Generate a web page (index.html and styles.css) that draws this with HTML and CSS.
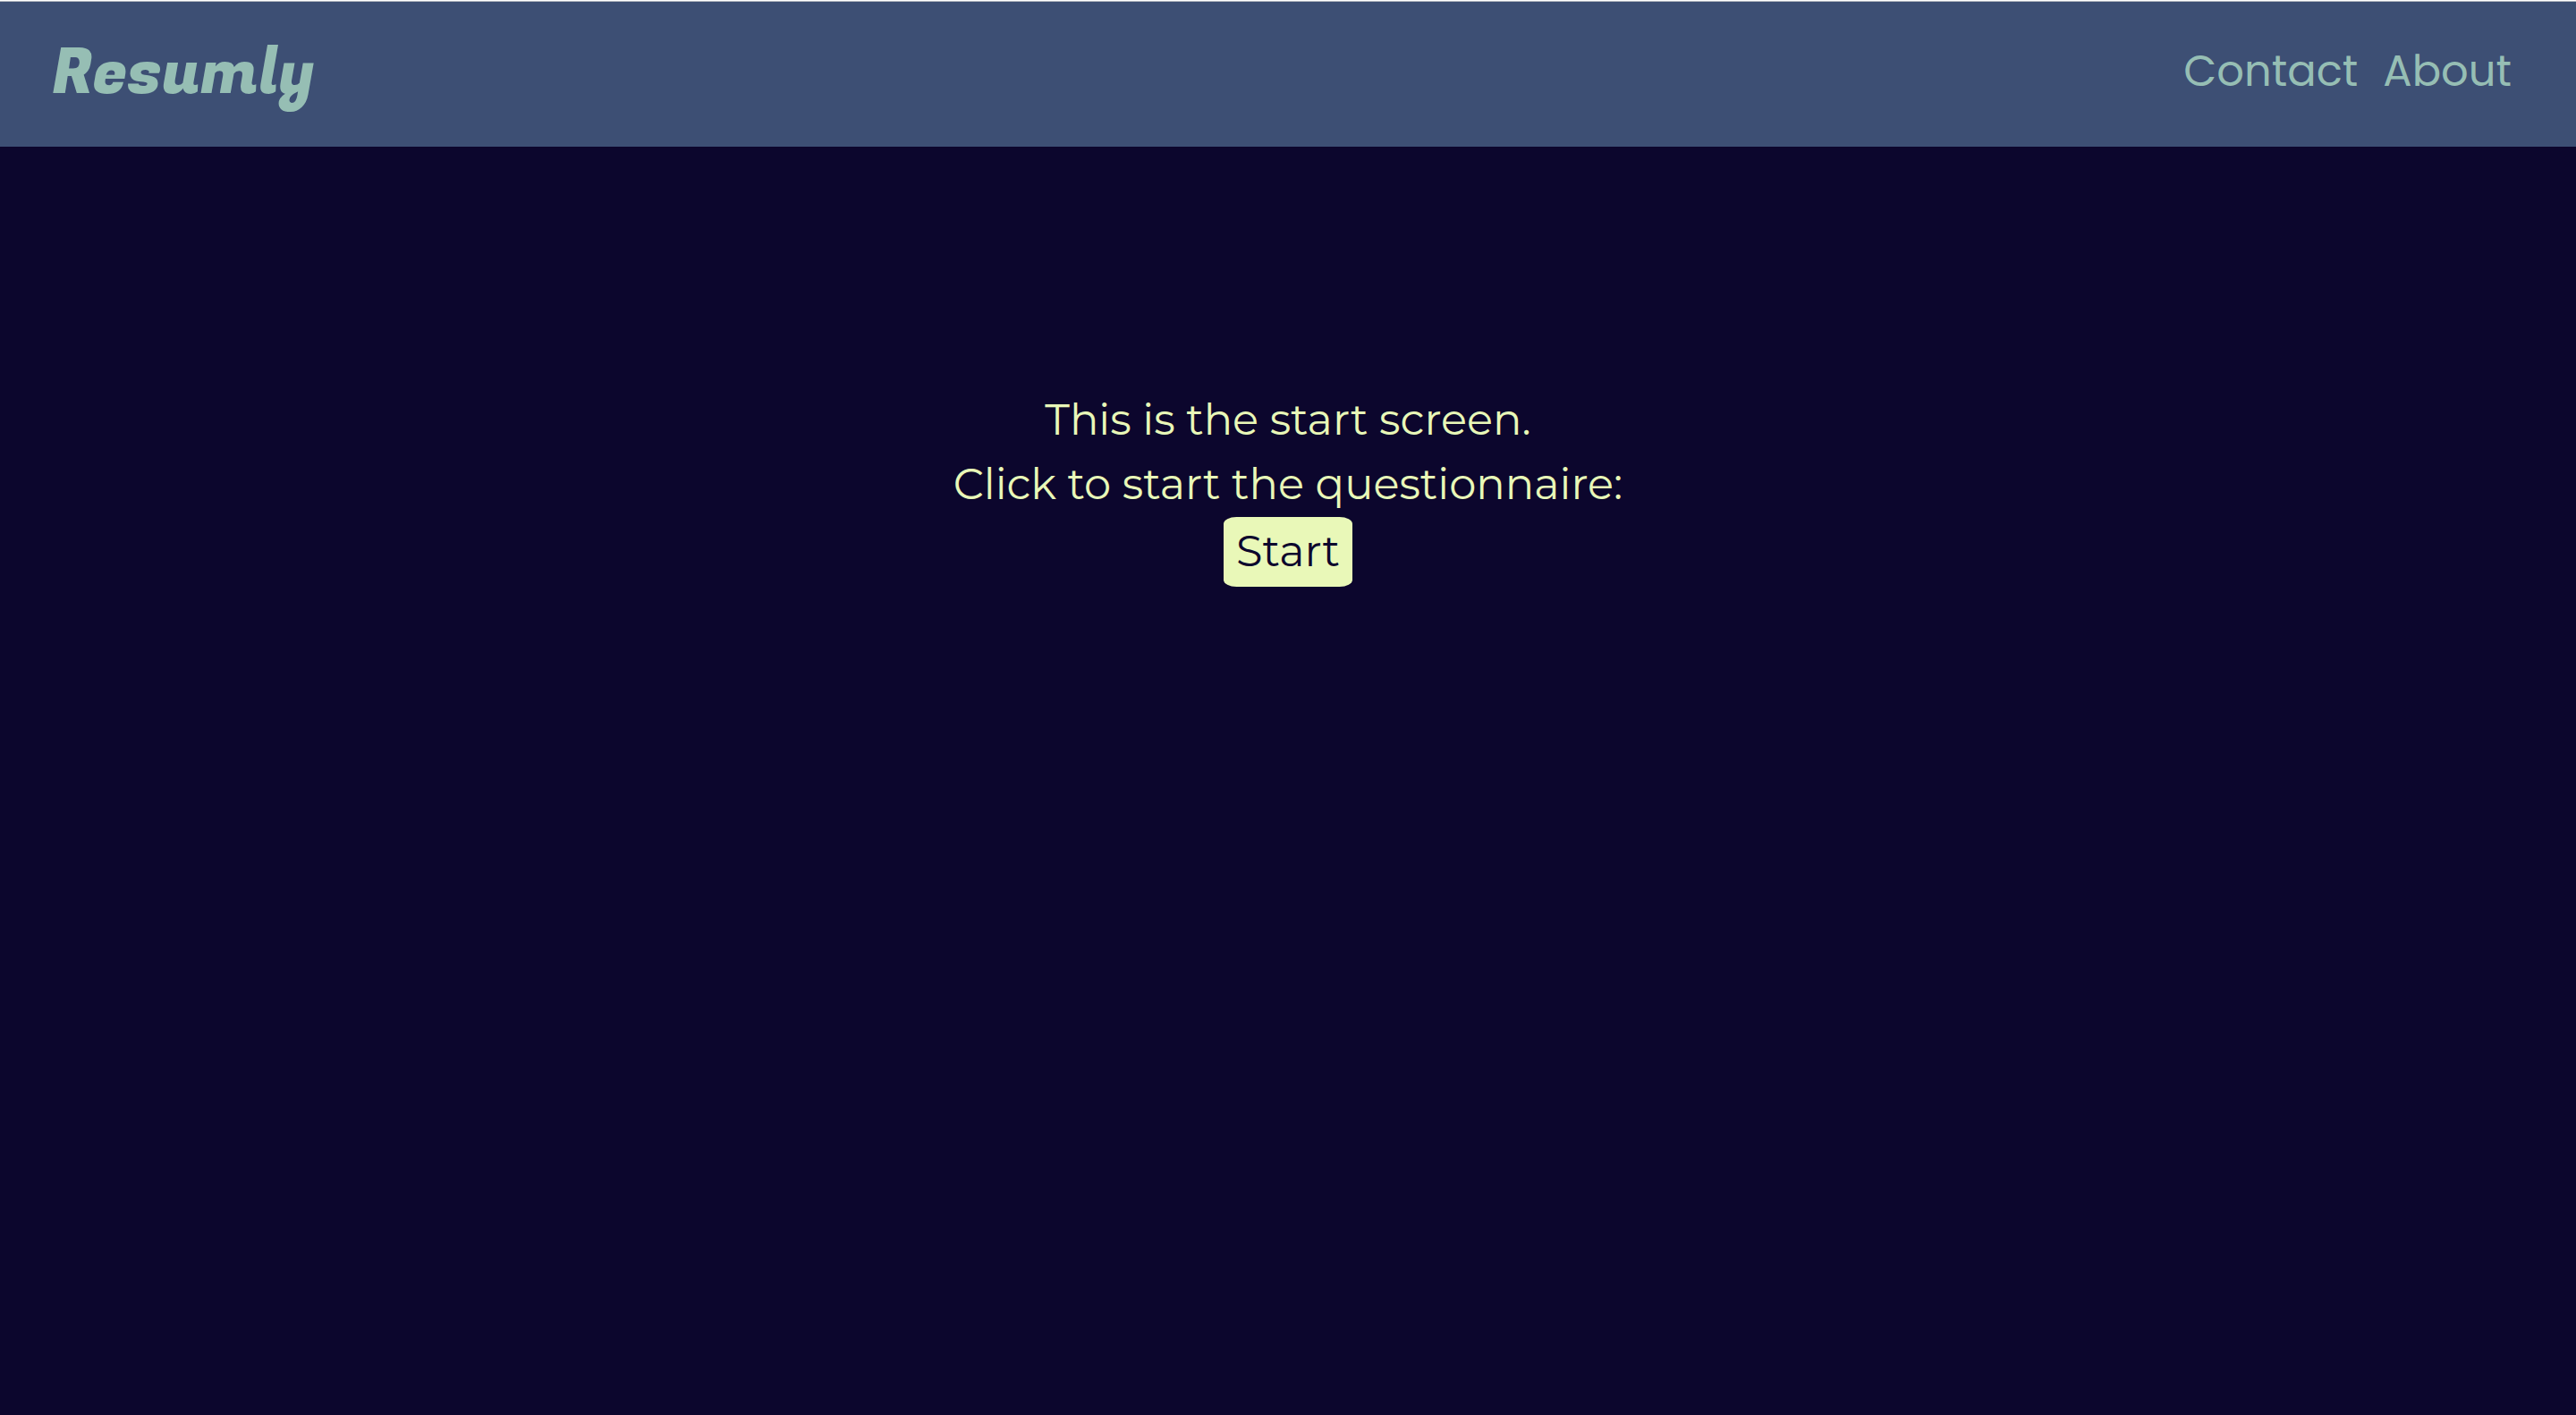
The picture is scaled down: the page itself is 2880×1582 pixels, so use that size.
FILE: index.html
```html
<!DOCTYPE html>
<html lang="en">
<head>
<meta charset="utf-8">
<title>Resumly</title>
<link rel="stylesheet" href="styles.css">
</head>
<body>
<header class="site-header">
  <a class="logo" href="#">Resumly</a>
  <nav class="site-nav">
    <a href="#">Contact</a>
    <a href="#">About</a>
  </nav>
</header>
<main class="start-screen">
  <p>This is the start screen.</p>
  <p>Click to start the questionnaire:</p>
  <button class="start-button" type="button">Start</button>
</main>
</body>
</html>
```
FILE: styles.css
```css
* {
  box-sizing: border-box;
}

body {
  margin: 0;
  min-height: 100vh;
  background: #0c062d;
  color: #e9f8b8;
  font-family: Montserrat, "Open Sans", sans-serif;
  font-size: 48px;
  font-weight: 400;
  line-height: 72px;
}

.site-header {
  display: flex;
  justify-content: space-between;
  align-items: flex-start;
  padding: 43px 72px 42px 58px;
  border-top: 1px solid #ffffff;
  background: #3d4f74;
  box-shadow: inset 0 1px #b4b8c0;
}

.site-header a {
  color: #96beb4;
  text-decoration: none;
}

.site-header .logo {
  font-family: "Fugaz One", "Noto Sans", sans-serif;
  font-size: 70px;
  line-height: 78px;
}

.site-nav {
  display: flex;
  gap: 28px;
  font-family: Poppins, Montserrat, sans-serif;
}

.start-screen {
  display: flex;
  flex-direction: column;
  align-items: center;
  padding: 269px 32px 32px;
}

.start-screen p {
  margin: 0;
}

.start-button {
  margin-top: 1px;
  padding: 2px 14px 4px;
  border: 0;
  border-radius: 10%;
  background: #e9f8b8;
  color: #0c062d;
  font: inherit;
}
```
